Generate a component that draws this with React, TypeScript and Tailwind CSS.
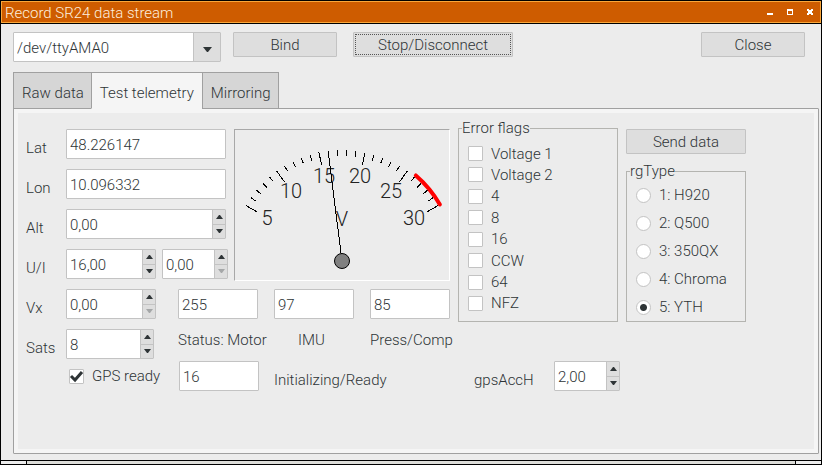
import { useState, type ReactNode } from "react";

const errorFlags = ["Voltage 1", "Voltage 2", "4", "8", "16", "CCW", "64", "NFZ"];
const rgTypes = ["1: H920", "2: Q500", "3: 350QX", "4: Chroma", "5: YTH"];

function PushButton({ children, className, focused }: { children: ReactNode; className: string; focused?: boolean }) {
  return (
    <button type="button" className={`h-[25px] rounded-[1px] border border-[#c3c3c3] bg-[#dedede] p-px ${className}`}>
      <span
        className={`flex h-full items-center justify-center border border-dotted ${focused ? "border-[#555]" : "border-transparent"}`}
      >
        {children}
      </span>
    </button>
  );
}

function TextField({ id, value, className, label }: { id: string; value: string; className: string; label?: string }) {
  return (
    <input
      id={id}
      aria-label={label}
      type="text"
      defaultValue={value}
      className={`h-[30px] rounded-[1px] border border-[#c3c3c3] bg-white px-[3px] pt-0.5 outline-none ${className}`}
    />
  );
}

function SpinField({
  id,
  value,
  className,
  label,
  atMinimum,
}: {
  id: string;
  value: string;
  className: string;
  label?: string;
  atMinimum?: boolean;
}) {
  return (
    <div className={`flex h-[30px] rounded-[1px] border border-[#c3c3c3] bg-white ${className}`}>
      <input
        id={id}
        aria-label={label}
        type="text"
        inputMode="decimal"
        defaultValue={value}
        className="min-w-0 flex-1 bg-transparent px-[3px] pt-0.5 outline-none"
      />
      <div className="flex w-[13px] flex-col border-l border-[#c3c3c3] bg-[#dedede]">
        <button type="button" aria-label="Increase" className="flex flex-1 items-center justify-center border-b border-[#c3c3c3]">
          <svg width="7" height="4" viewBox="0 0 7 4" fill="#2e3436">
            <path d="M3 0h1L7 4H0z" />
          </svg>
        </button>
        <button type="button" aria-label="Decrease" disabled={atMinimum} className="flex flex-1 items-center justify-center">
          <svg width="7" height="4" viewBox="0 0 7 4" fill={atMinimum ? "#a5a7a8" : "#2e3436"}>
            <path d="M0 0h7L4 4H3z" />
          </svg>
        </button>
      </div>
    </div>
  );
}

const PIVOT = { x: 107, y: 131 };

function polar(value: number, radius: number) {
  const angle = ((150 - (value - 5) * 4.8) * Math.PI) / 180;
  return { x: PIVOT.x + radius * Math.cos(angle), y: PIVOT.y - radius * Math.sin(angle) };
}

const dialNumbers = [
  { text: "5", x: 32, y: 95 },
  { text: "10", x: 56, y: 68 },
  { text: "15", x: 89, y: 53 },
  { text: "20", x: 125, y: 53 },
  { text: "25", x: 156, y: 68 },
  { text: "30", x: 179, y: 95 },
  { text: "V", x: 107, y: 96 },
];

function VoltMeter({ volts }: { volts: number }) {
  const ticks = Array.from({ length: 26 }, (_, i) => i + 5);
  const redStart = polar(26, 113);
  const redEnd = polar(30, 113);
  const tip = polar(volts, 111);
  return (
    <div className="ml-1.5 border border-[#a8a8a8] border-r-white border-b-white">
      <svg width="214" height="150" viewBox="0 0 214 150" role="img" aria-label="Voltage">
        {ticks.map((v) => {
          const outer = polar(v, 111);
          const inner = polar(v, v % 5 === 0 ? 98 : 105);
          return (
            <line
              key={v}
              x1={outer.x}
              y1={outer.y}
              x2={inner.x}
              y2={inner.y}
              stroke="#000"
              shapeRendering="crispEdges"
            />
          );
        })}
        <path
          d={`M${redStart.x} ${redStart.y}A113 113 0 0 1 ${redEnd.x} ${redEnd.y}`}
          fill="none"
          stroke="#f00"
          strokeWidth="4"
          strokeLinecap="round"
        />
        {dialNumbers.map((n) => (
          <text key={n.text} x={n.x} y={n.y} textAnchor="middle" className="fill-[#222] text-[20px]">
            {n.text}
          </text>
        ))}
        <line x1={PIVOT.x} y1={PIVOT.y} x2={tip.x} y2={tip.y} stroke="#000" shapeRendering="crispEdges" />
        <circle cx={PIVOT.x} cy={PIVOT.y} r="7.5" fill="#808080" stroke="#000" />
      </svg>
    </div>
  );
}

function FieldLabel({ htmlFor, children }: { htmlFor: string; children: ReactNode }) {
  return (
    <label htmlFor={htmlFor} className="w-10 shrink-0 self-end">
      {children}
    </label>
  );
}

function Check({ id, label, defaultChecked, className }: { id: string; label: string; defaultChecked?: boolean; className?: string }) {
  return (
    <label htmlFor={id} className={`flex items-center gap-2 ${className ?? ""}`}>
      <span className="relative flex">
        <input
          id={id}
          type="checkbox"
          defaultChecked={defaultChecked}
          className="peer size-[15px] appearance-none rounded-[1px] border border-[#c3c3c3] bg-white"
        />
        <svg
          className="pointer-events-none absolute inset-0 hidden peer-checked:block"
          width="15"
          height="15"
          viewBox="0 0 15 15"
          fill="none"
          stroke="#2e3436"
          strokeWidth="3"
        >
          <path d="M2 7l4 4 7-8" />
        </svg>
      </span>
      {label}
    </label>
  );
}

const tabs = ["Raw data", "Test telemetry", "Mirroring"];

export default function App() {
  const [rgType, setRgType] = useState("5: YTH");
  return (
    <div className="flex min-h-screen flex-col border border-black bg-[#ececec] font-['Roboto','Liberation_Sans',sans-serif] text-[15px] leading-[22px] font-light text-[#2e3436]">
      <header className="border-b border-black">
        <div className="flex h-[22px] items-center border border-[#f9a63a] bg-[#ce5c00] pr-[7px] pl-[3px]">
          <h1 className="flex-1 pt-0.5 text-[#fdeedd]">Record SR24 data stream</h1>
          <div className="flex gap-[14px] text-white">
            <button type="button" aria-label="Minimize">
              <svg width="6" height="6" viewBox="0 0 6 6" fill="currentColor">
                <path d="M0 4h6v2H0z" />
              </svg>
            </button>
            <button type="button" aria-label="Maximize">
              <svg width="6" height="6" viewBox="0 0 6 6" fill="currentColor" fillRule="evenodd">
                <path d="M0 0h6v6H0zM1 2v3h4V2z" />
              </svg>
            </button>
            <button type="button" aria-label="Close window">
              <svg width="6" height="6" viewBox="0 0 6 6" fill="currentColor">
                <path d="M0 0h2v1h2V0h2v2H5v2h1v2H4V5H2v1H0V4h1V2H0z" />
              </svg>
            </button>
          </div>
        </div>
      </header>

      <div className="flex items-start pt-2 pr-4 pl-3">
        <div className="relative h-[30px] w-[208px]">
          <select
            aria-label="Serial port"
            className="h-full w-full appearance-none rounded-[1px] border border-[#c3c3c3] bg-white pt-0.5 pr-8 pl-[3px] outline-none"
          >
            <option>/dev/ttyAMA0</option>
          </select>
          <span className="pointer-events-none absolute inset-y-px right-px flex w-[27px] items-center justify-center border-l border-[#c3c3c3] bg-[#dedede] pt-1">
            <svg width="9" height="5" viewBox="0 0 9 5" fill="#2e3436">
              <path d="M0 0h9L5 5H4z" />
            </svg>
          </span>
        </div>
        <PushButton className="ml-3 w-[104px]">Bind</PushButton>
        <PushButton className="ml-4 w-[160px]" focused>
          Stop/Disconnect
        </PushButton>
        <PushButton className="ml-auto w-[104px]">Close</PushButton>
      </div>

      <div role="tablist" className="relative z-10 mt-2.5 -mb-px ml-3 flex h-[37px]">
        {tabs.map((tab) => {
          const active = tab === "Test telemetry";
          return (
            <button
              key={tab}
              type="button"
              role="tab"
              aria-selected={active}
              className={`border-t border-l border-b border-[#a0a0a0] pt-1 pl-2 last:border-r ${
                active ? "border-b-[#f5f5f5] bg-[#f5f5f5] pr-2" : "bg-[#d6d6d6] pr-[7px]"
              }`}
            >
              {tab}
            </button>
          );
        })}
      </div>

      <main className="mr-0.5 mb-1.5 ml-3 flex flex-1 flex-col rounded-[1px] border border-[#a0a0a0]">
        <form className="flex-1 border-4 border-[#f5f5f5] pt-1.5 pl-2">
          <div className="flex items-start">
            <div className="mt-2.5 flex flex-col">
              <div className="flex">
                <div className="flex w-[202px] flex-col gap-2.5">
                  <div className="flex">
                    <FieldLabel htmlFor="lat">Lat</FieldLabel>
                    <TextField id="lat" value="48.226147" className="w-[160px]" />
                  </div>
                  <div className="flex">
                    <FieldLabel htmlFor="lon">Lon</FieldLabel>
                    <TextField id="lon" value="10.096332" className="w-[160px]" />
                  </div>
                  <div className="flex">
                    <FieldLabel htmlFor="alt">Alt</FieldLabel>
                    <SpinField id="alt" value="0,00" className="w-[160px]" />
                  </div>
                  <div className="flex">
                    <FieldLabel htmlFor="voltage">U/I</FieldLabel>
                    <SpinField id="voltage" value="16,00" className="w-[90px]" />
                    <SpinField id="current" label="Current" value="0,00" className="ml-1.5 w-[66px]" atMinimum />
                  </div>
                </div>
                <VoltMeter volts={16} />
              </div>

              <div className="mt-2 flex">
                <FieldLabel htmlFor="vx">Vx</FieldLabel>
                <SpinField id="vx" value="0,00" className="w-[90px]" atMinimum />
                <div className="ml-[22px] flex gap-4">
                  <TextField id="motor" value="255" className="w-20" />
                  <TextField id="imu" value="97" className="w-20" />
                  <TextField id="press" value="85" className="w-20" />
                </div>
              </div>

              <div className="mt-2.5 grid grid-cols-[152px_120px_72px_80px]">
                <div className="flex">
                  <FieldLabel htmlFor="sats">Sats</FieldLabel>
                  <SpinField id="sats" value="8" className="w-[88px]" />
                </div>
                <label htmlFor="motor">Status: Motor</label>
                <label htmlFor="imu">IMU</label>
                <label htmlFor="press">Press/Comp</label>
              </div>
            </div>

            <fieldset className="ml-2 h-[203px] w-[160px] border border-[#b4b4b0] px-[3px]">
              <legend className="leading-[18px]">Error flags</legend>
              <div className="flex h-[177px] flex-col justify-between pt-1.5 pl-1.5">
                {errorFlags.map((flag) => (
                  <Check key={flag} id={`flag-${flag}`} label={flag} className="h-[21px]" />
                ))}
              </div>
            </fieldset>

            <div className="ml-2 flex w-[120px] flex-col">
              <PushButton className="mt-2.5 w-full">Send data</PushButton>
              <fieldset className="mt-2 h-[160px] border border-[#b4b4b0] px-[3px]">
                <legend className="leading-[18px]">rgType</legend>
                <div className="flex flex-col gap-1.5 pt-1 pl-1.5">
                  {rgTypes.map((type) => (
                    <label key={type} className="flex items-center gap-2">
                      <input
                        type="radio"
                        name="rgType"
                        checked={rgType === type}
                        onChange={() => setRgType(type)}
                        className="size-[15px] appearance-none rounded-full border border-[#c3c3c3] bg-white checked:bg-[radial-gradient(circle,#2e3436_3px,#fff_4px)]"
                      />
                      {type}
                    </label>
                  ))}
                </div>
              </fieldset>
            </div>
          </div>

          <div className="mt-0.5 grid grid-cols-[153px_95px_200px_80px_66px]">
            <Check id="gps-ready" label="GPS ready" defaultChecked className="pl-[43px]" />
            <TextField id="init" value="16" className="w-20" />
            <label htmlFor="init" className="self-end">
              Initializing/Ready
            </label>
            <label htmlFor="gps-acc" className="self-end">
              gpsAccH
            </label>
            <SpinField id="gps-acc" value="2,00" className="w-[66px]" />
          </div>
        </form>
      </main>

      <footer className="flex h-1 border-t border-black px-[25px]">
        <div className="flex-1 border-x border-black bg-[#dcdcd8]" />
      </footer>
    </div>
  );
}
